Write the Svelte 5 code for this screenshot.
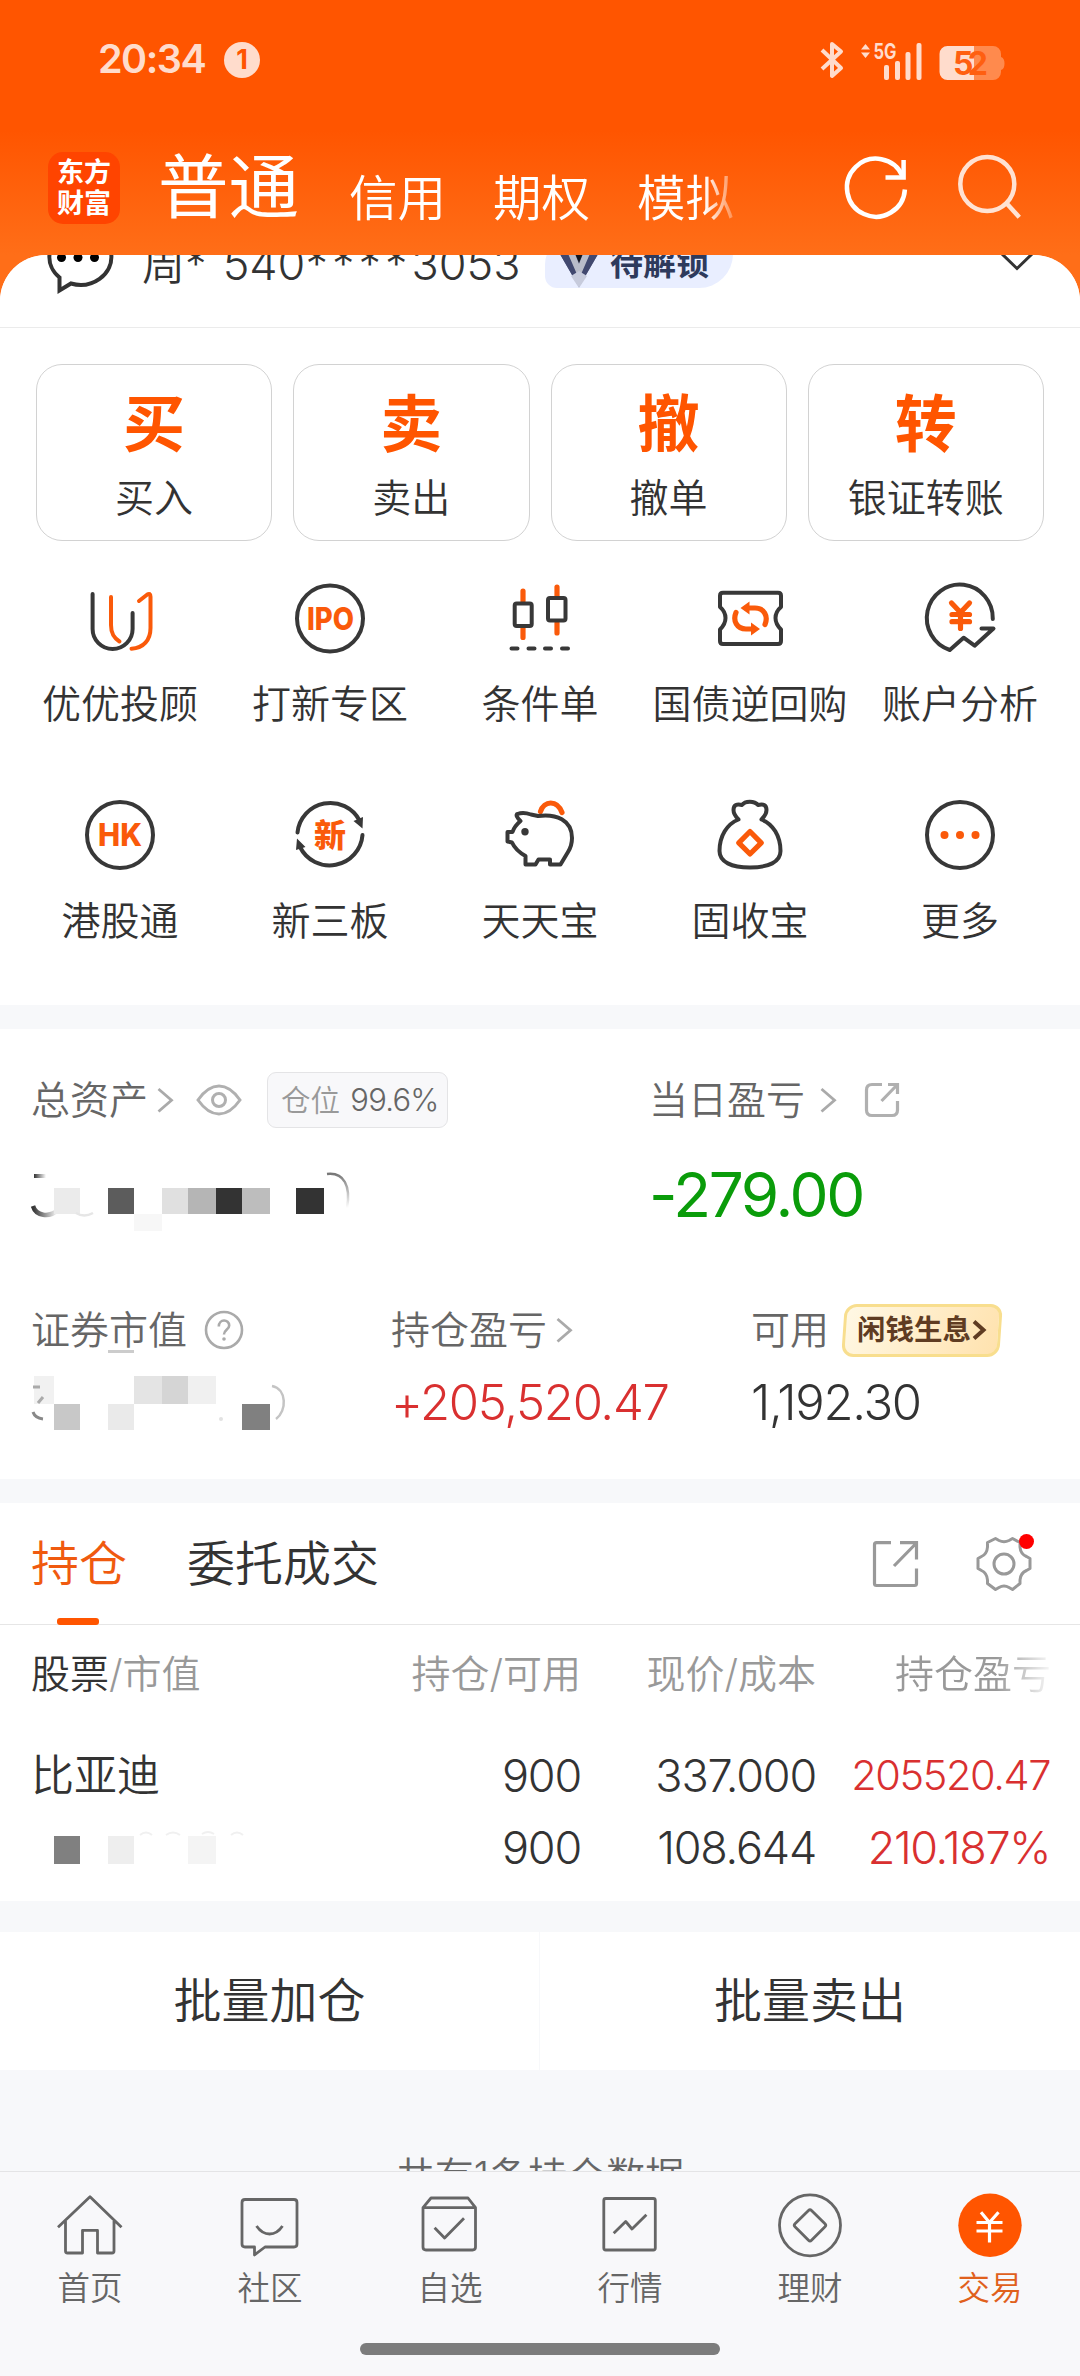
<script lang="ts">
	type Cell = { x: number; y: number; w: number; h: number; fill: string };

	const accountTabs = ['信用', '期权', '模拟'];

	const tradeActions = [
		{ mark: '买', label: '买入' },
		{ mark: '卖', label: '卖出' },
		{ mark: '撤', label: '撤单' },
		{ mark: '转', label: '银证转账' }
	];

	const services = [
		{ icon: 'advisor', label: '优优投顾' },
		{ icon: 'ipo', label: '打新专区' },
		{ icon: 'candles', label: '条件单' },
		{ icon: 'repo', label: '国债逆回购' },
		{ icon: 'analysis', label: '账户分析' },
		{ icon: 'hk', label: '港股通' },
		{ icon: 'neeq', label: '新三板' },
		{ icon: 'piggy', label: '天天宝' },
		{ icon: 'bag', label: '固收宝' },
		{ icon: 'more', label: '更多' }
	];

	const navItems = [
		{ icon: 'home', label: '首页' },
		{ icon: 'community', label: '社区' },
		{ icon: 'watchlist', label: '自选' },
		{ icon: 'market', label: '行情' },
		{ icon: 'wealth', label: '理财' },
		{ icon: 'trade', label: '交易', active: true }
	];

	// pixel blocks that hide the private amounts
	const totalMask: Cell[] = [
		{ x: 23, y: 28, w: 26, h: 26, fill: '#ebebeb' },
		{ x: 77, y: 28, w: 26, h: 26, fill: '#5c5c5c' },
		{ x: 131, y: 28, w: 26, h: 26, fill: '#e0e0e0' },
		{ x: 157, y: 28, w: 28, h: 26, fill: '#b5b5b5' },
		{ x: 185, y: 28, w: 26, h: 26, fill: '#333333' },
		{ x: 211, y: 28, w: 28, h: 26, fill: '#bdbdbd' },
		{ x: 265, y: 28, w: 28, h: 26, fill: '#333333' },
		{ x: 103, y: 54, w: 28, h: 17, fill: '#f7f7f7' }
	];

	const marketMask: Cell[] = [
		{ x: 3, y: 3, w: 20, h: 28, fill: '#f1f1f1' },
		{ x: 103, y: 3, w: 28, h: 28, fill: '#e4e4e4' },
		{ x: 131, y: 3, w: 26, h: 28, fill: '#d5d5d5' },
		{ x: 157, y: 3, w: 28, h: 28, fill: '#f0f0f0' },
		{ x: 23, y: 31, w: 26, h: 26, fill: '#c8c8c8' },
		{ x: 77, y: 31, w: 26, h: 26, fill: '#eaeaea' },
		{ x: 211, y: 31, w: 28, h: 26, fill: '#808080' }
	];

	const stockMask: Cell[] = [
		{ x: 23, y: 8, w: 26, h: 28, fill: '#808080' },
		{ x: 77, y: 8, w: 26, h: 28, fill: '#eeeeee' },
		{ x: 157, y: 8, w: 28, h: 28, fill: '#f4f4f4' }
	];
</script>

{#snippet cells(list: Cell[])}
	{#each list as c}
		<rect x={c.x} y={c.y} width={c.w} height={c.h} fill={c.fill} />
	{/each}
{/snippet}

{#snippet chevron()}
	<svg class="chevron" width="18" height="28" viewBox="0 0 18 28">
		<path d="M2.5 3 15.5 14.2 2.5 25.5" />
	</svg>
{/snippet}

<div class="app">
	<header>
		<div class="status">
			<span class="time">20:34</span>
			<span class="notice">1</span>
			<svg class="signals" width="190" height="44" viewBox="0 0 190 44">
				<path class="bt" d="M3 12 22 30 13 38V6L22 13.5 3 31" />
				<path class="lit" d="M42 11.5 46.500 6 51 11.500zM42 14.500 46.500 20 51 14.500z" />
				<text class="net" x="54.500" y="20.500" textLength="23" lengthAdjust="spacingAndGlyphs">5G</text>
				<rect class="lit" x="65" y="27" width="5" height="15" rx="2" />
				<rect class="lit" x="76" y="23" width="5" height="19" rx="2" />
				<rect class="lit" x="86.500" y="14" width="5" height="28" rx="2" />
				<rect class="lit" x="97.500" y="5" width="5" height="37" rx="2" />
				<path class="dim" d="M155 8h19a8 8 0 0 1 8 8v3q3.500 1 3.500 6.500T182 32v2a8 8 0 0 1-8 8H155z" />
				<path class="lit" d="M155 8h-26.500a8 8 0 0 0-8 8v18a8 8 0 0 0 8 8H155z" />
				<text class="level" x="134" y="36.500" textLength="35">52</text>
			</svg>
		</div>
		<div class="titlebar">
			<div class="logo"><span>东方</span><span>财富</span></div>
			<h1>普通</h1>
			<div class="account-tabs">
				{#each accountTabs as tab}
					<span>{tab}</span>
				{/each}
			</div>
			<svg class="head-icon refresh" width="80" height="80" viewBox="0 0 80 80">
				<path d="M68.9 41.5A29 29 0 1 1 66.5 28" />
				<path d="M67.6 12V29.5H49.5" />
			</svg>
			<svg class="head-icon search" width="80" height="80" viewBox="0 0 80 80">
				<circle cx="40.3" cy="36" r="27" />
				<path d="M58.6 54.3 72.3 69.3" />
			</svg>
		</div>
	</header>

	<main>
		<section class="sheet">
			<div class="account-clip">
				<div class="account">
					<svg class="chat" width="72" height="80" viewBox="0 0 72 80">
						<path d="M17.5 53.5A31 28 0 1 1 29 59.5L17.5 66.5z" />
						<circle cx="19.5" cy="33.5" r="4.5" />
						<circle cx="36" cy="33.5" r="4.5" />
						<circle cx="52.5" cy="33.5" r="4.5" />
					</svg>
					<span class="account-no">周* <span class="digits">540<span class="stars">****</span>3053</span></span>
					<span class="level-badge">
						<svg width="44" height="50" viewBox="0 0 44 50">
							<path d="M0 10H44L22 48z" fill="#6b7190" />
							<path d="M0 10H12L22 34 32 10H44L22 48z" fill="#41486f" />
							<path d="M9 10 22 40 35 10H28L22 25 16 10z" fill="#b9bcc9" />
							<path d="M17 12H27L22 24z" fill="#14161f" />
							<path d="M14 37 22 32 30 37 22 49z" fill="#c7cbdc" />
						</svg>
						待解锁
					</span>
					<svg class="expand" width="36" height="24" viewBox="0 0 36 24">
						<path d="M2 1 18 16.5 34 1" />
					</svg>
				</div>
			</div>

			<div class="actions">
				{#each tradeActions as action}
					<button type="button" class="action">
						<b>{action.mark}</b>
						<span>{action.label}</span>
					</button>
				{/each}
			</div>

			<div class="services">
				{#each services as service}
					<div class="service">
						<svg width="80" height="80" viewBox="0 0 80 80">
							{#if service.icon === 'advisor'}
								<path class="k" d="M12.6 16V51a20 20 0 0 0 40 0V35" />
								<path class="o" d="M31 19V47c0 9 3 13 8.5 16.5" />
								<path class="o" d="M59 23 67 16.7q3.5-2.3 3.5 2V50c0 12-7 20.2-19 20.7" />
							{:else if service.icon === 'ipo'}
								<circle class="k" cx="40" cy="40.5" r="33" />
								<text class="mark" x="17" y="51.5" font-size="31" textLength="47" lengthAdjust="spacingAndGlyphs">IPO</text>
							{:else if service.icon === 'candles'}
								<path class="o bold" d="M23 13V23M23 50V59.5M57 9V18M57 45V55" />
								<rect class="k" x="14.7" y="25.5" width="17" height="22.5" rx="2" />
								<rect class="k" x="48" y="20" width="17.5" height="22.5" rx="2" />
								<path class="k" d="M11.5 70.5H17.5M28.5 70.5H34.5M45 70.5H51M62 70.5H68" />
							{:else if service.icon === 'repo'}
								<path class="k" d="M13 14.7H68q3 0 3 3V29c-3.5 3-5.5 6-5.5 11s2 8 5.500 11.500V63q0 3-3 3H13q-3 0-3-3V51.5c3.5-3.5 5.5-6.5 5.5-11.5S13.5 32 10 29V17.7q0-3 3-3z" />
								<path class="o bold" d="M26 34.5C22.5 43 27 51 36 51H43M55 46.5C58.5 38 54 30 45 30H38" />
								<path class="of" d="M41 44.5 50 51 41 57.500zM39.5 23.5 30.5 30 39.5 36.5z" />
							{:else if service.icon === 'analysis'}
								<path class="k" d="M72.8 41A33 33.5 0 1 0 29.8 72L43.6 59.7 54.6 67.7 73.5 50.5H61.5" />
								<path class="o bold" d="M31.5 25 40.5 34.5 49.5 25M40.5 34.5V50.5M32 36.5H49.5M32 43.7H49.5" />
							{:else if service.icon === 'hk'}
								<circle class="k" cx="40" cy="40" r="33" />
								<text class="mark" x="18" y="51" font-size="31" textLength="44" lengthAdjust="spacingAndGlyphs">HK</text>
							{:else if service.icon === 'neeq'}
								<path class="k" d="M7.5 37.5A33 33 0 0 1 69.5 25.5M72.5 40A33 33 0 0 1 10 52" />
								<path class="kf" d="M63.5 26 73 22 72.5 33.500zM7 43.5 15.5 52 6 55z" />
								<text class="mark" x="24" y="51.5" font-size="32">新</text>
							{:else if service.icon === 'piggy'}
								<path class="o bold" d="M40.5 16.5C44 5.5 57 4.5 62 17.5" />
								<path class="k" d="M20.5 26C17 23 15.5 19.5 17.5 19 21 17.5 27 18 31 19.5L38 21C56 18.5 72 25 72 43 72 49 70.5 53 68 57L60.5 69.5H50V64.5H38.5L35.5 69.5H25.5V61C18.5 57 14.5 53 12 47.5L7.5 46.5V37H12.5C14 32 17 29 20.5 26z" />
								<circle class="kf" cx="25" cy="36.8" r="3.7" />
							{:else if service.icon === 'bag'}
								<path class="k" d="M28.5 24.5C24 20 23.5 18 23.5 15c0-5 3.5-6.5 8.5-5 3-4.5 12.5-4.5 16 0C53 8.5 56.5 10 56.5 15c0 3-.5 5-5 9.5C63 29 70.5 41 70.5 56c0 11-12 16.5-30.5 16.5S9.5 67 9.5 56C9.5 41 17 29 28.5 24.5z" />
								<path class="o bold" d="M40 36.5 51.2 47.8 40 59 28.8 47.8z" />
							{:else}
								<circle class="k" cx="40" cy="40" r="33" />
								<circle class="of" cx="24.5" cy="40" r="4" />
								<circle class="of" cx="40" cy="40" r="4" />
								<circle class="of" cx="55.5" cy="40" r="4" />
							{/if}
						</svg>
						<span>{service.label}</span>
					</div>
				{/each}
			</div>
		</section>

		<section class="assets">
			<div class="line two">
				<div class="label">
					总资产
					<span class="gap-s">{@render chevron()}</span>
					<svg class="eye" width="46" height="34" viewBox="0 0 46 34">
						<path d="M2 17C9 7 15 3 23 3S37 7 44 17C37 27 31 31 23 31S9 27 2 17z" />
						<circle cx="23" cy="17" r="6.5" />
					</svg>
					<span class="position">仓位 <em>99.6%</em></span>
				</div>
				<div class="label">
					当日盈亏
					<span class="gap-m">{@render chevron()}</span>
					<svg class="share small" width="36" height="36" viewBox="0 0 36 36">
						<path d="M18 2.5H8q-5.5 0-5.5 5.5V28q0 5.5 5.5 5.5H28q5.5 0 5.5-5.5V19M24 2.5H33.5V12M33 3 17.5 19" />
					</svg>
				</div>
			</div>
			<div class="line two total">
				<svg class="mask" width="330" height="70" viewBox="0 0 330 70">
					<defs>
						<linearGradient id="fadeRight"><stop stop-color="#333" /><stop offset="1" stop-color="#333" stop-opacity="0" /></linearGradient>
						<linearGradient id="fadeDown" x2="0" y2="1"><stop stop-color="#777" /><stop offset="1" stop-color="#777" stop-opacity="0" /></linearGradient>
					</defs>
					<rect x="3" y="14" width="12" height="4" fill="url(#fadeRight)" />
					<path d="M2 46C5 56 18 58 27 50" stroke="url(#fadeRight)" stroke-width="4.5" fill="none" />
					{@render cells(totalMask)}
					<path d="M45 53Q53 58 62 53" stroke="#e6e6e6" stroke-width="2.5" fill="none" />
					<path d="M296 14C313 12 320 26 316 48" stroke="url(#fadeDown)" stroke-width="2.5" fill="none" />
				</svg>
				<span class="day-profit">-279.00</span>
			</div>
			<div class="line three sub">
				<div class="label">
					<span class="smudged">证券市值</span>
					<svg class="help" width="40" height="40" viewBox="0 0 40 40">
						<circle cx="20" cy="20" r="18" />
						<path d="M14.8 16.5C14.8 8.5 25.2 9 25.2 15.5 25.2 19.5 20 19.5 20 24.5" />
						<circle class="dot" cx="20" cy="29" r="1.8" />
					</svg>
				</div>
				<div class="label">
					持仓盈亏
					<span class="gap-s">{@render chevron()}</span>
				</div>
				<div class="label">
					可用
					<span class="promo"><i></i><span>闲钱生息</span>
						<svg width="16" height="24" viewBox="0 0 16 24"><path d="M3 3.5 12.5 12 3 20.5" /></svg>
					</span>
				</div>
			</div>
			<div class="line three amounts">
				<svg class="mask" width="330" height="60" viewBox="0 0 330 60">
					{@render cells(marketMask)}
					<path d="M2 14H9M12 24 7 30" stroke="#aaa" stroke-width="3" fill="none" />
					<path d="M2 39Q4 45 12 46" stroke="#888" stroke-width="3" fill="none" />
					<path d="M241 13C256 16 256 38 245 46" stroke="#c4c4c4" stroke-width="2.5" fill="none" />
					<circle cx="190" cy="46" r="2" fill="#e2e2e2" />
				</svg>
				<span class="hold-profit">+205,520.47</span>
				<span class="cash">1,192.30</span>
			</div>
		</section>

		<section class="holdings">
			<div class="tabs">
				<span class="tab current">持仓</span>
				<span class="tab">委托成交</span>
				<svg class="share large" width="50" height="50" viewBox="0 0 50 50">
					<path d="M20 3.7H5.5q-2 0-2 2V44.5q0 2 2 2H43.5q2 0 2-2V29.5M29 3.7H45.5V20.5M45 4.5 23 27" />
				</svg>
				<span class="settings">
					<svg width="60" height="60" viewBox="0 0 60 60">
						<path d="M21.5 4.5 25 6.5Q30 9 35 6.5L38.5 4.5 46 8.5V13Q46.5 20 52.5 22.5L56 24.5V34.5L52.5 36.5Q46.5 39 46 46V49.5L38.5 55.5 35 53.5Q30 50.5 25 53.5L21.5 55.5 13.5 49.5V46Q13 39 7.5 36.5L4 34.5V24.5L7.5 22.5Q13 20 13.5 13V8.5z" />
						<circle cx="30" cy="30" r="10" />
					</svg>
					<i></i>
				</span>
			</div>
			<div class="row head">
				<span class="first"><b>股票</b>/市值</span>
				<span>持仓/可用</span>
				<span>现价/成本</span>
				<span class="fade">持仓盈亏</span>
			</div>
			<div class="stock">
				<div class="row">
					<span class="first name">比亚迪</span>
					<span class="num">900</span>
					<span class="num">337.000</span>
					<span class="num up amount">205520.47</span>
				</div>
				<div class="row">
					<svg class="mask" width="330" height="40" viewBox="0 0 330 40">
						{@render cells(stockMask)}
						<path d="M109 7Q115 2 121 7M135 7Q142 2 149 7M171 6Q177 2 183 6M200 7Q206 2 212 7" stroke="#f0f0f0" stroke-width="2" fill="none" />
					</svg>
					<span class="num">900</span>
					<span class="num">108.644</span>
					<span class="num up">210.187%</span>
				</div>
			</div>
		</section>

		<div class="batch">
			<button type="button">批量加仓</button>
			<button type="button">批量卖出</button>
		</div>
		<p class="count">共有1条持仓数据</p>
	</main>

	<nav>
		<div class="nav-items">
			{#each navItems as item}
				<div class="nav-item" class:active={item.active}>
					<svg width="80" height="80" viewBox="0 0 80 80">
						{#if item.icon === 'home'}
							<path d="M8 42.3 40 11.7 71.5 42.3M15.5 36V66q0 2 2 2H32.5V45.3H47.5V68H62q2 0 2-2V36" />
						{:else if item.icon === 'community'}
							<path d="M15 14.5H64q3 0 3 3V59q0 3-3 3H35L24.5 70V62H15q-3 0-3-3V17.5q0-3 3-3zM26.5 41Q32 49 39.6 49T52.5 41" />
						{:else if item.icon === 'watchlist'}
							<path d="M13 22.7 21 13H58L65.5 22.7V62q0 3-3 3H16q-3 0-3-3zH65.5M24.6 42.7 34.6 53 54 33.3" />
						{:else if item.icon === 'market'}
							<rect x="13.8" y="13.5" width="51.5" height="51.5" rx="2" />
							<path d="M23.7 48.3 35.7 36.5 42 44 56.4 29.7" />
						{:else if item.icon === 'wealth'}
							<circle cx="40" cy="40.3" r="30.5" />
							<path d="M38.5 25.5q1.5-1.5 3 0L55 38.8q1.5 1.5 0 3L41.5 55.2q-1.5 1.5-3 0L25 41.8q-1.5-1.5 0-3z" />
						{:else}
							<circle class="disc" cx="40" cy="40.3" r="31.7" />
							<path class="yen" d="M31 27.3 39.5 37.5 48.5 27.3M39.5 37.5V57.5M26.5 37.5H52.5M26.5 46H52.5" />
						{/if}
					</svg>
					<span>{item.label}</span>
				</div>
			{/each}
		</div>
		<div class="home-bar"></div>
	</nav>
</div>

<style>
	:global(body) {
		margin: 0;
	}

	.app {
		display: flex;
		flex-direction: column;
		width: 1080px;
		height: 2376px;
		overflow: hidden;
		background: linear-gradient(#ff5500 0, #ff5500 130px, #ff6e18 255px, #ff6e18 310px);
		color: #333;
		font-family: Inter, 'Noto Sans CJK SC', sans-serif;
		font-weight: 350;
		line-height: 1.2;
		white-space: nowrap;
	}

	svg {
		display: block;
		flex-shrink: 0;
	}

	button {
		padding: 0;
		border: none;
		background: none;
		color: inherit;
		font: inherit;
	}

	/* header */
	.status {
		display: flex;
		align-items: center;
		height: 120px;
		padding-left: 98px;
	}

	.time {
		width: 126px;
		color: #ffdccc;
		font-size: 39.5px;
		font-weight: 600;
		letter-spacing: -1.5px;
	}

	.notice {
		width: 36px;
		height: 36px;
		border-radius: 50%;
		background: #ffdccc;
		color: #ff5500;
		font-size: 27px;
		font-weight: 700;
		line-height: 36px;
		text-align: center;
	}

	.signals {
		margin-left: 559px;
	}

	.lit {
		fill: #ffdccc;
	}

	.dim {
		fill: #ff8a4d;
	}

	.bt {
		fill: none;
		stroke: #ffdccc;
		stroke-width: 4;
		stroke-linejoin: round;
	}

	.net {
		fill: #ffdccc;
		font-size: 21px;
		font-weight: 700;
	}

	.level {
		fill: #ff5f10;
		font-size: 32px;
		font-weight: 700;
	}

	.titlebar {
		display: flex;
		align-items: center;
		height: 135px;
		padding-left: 48px;
	}

	.logo {
		display: flex;
		flex-direction: column;
		justify-content: center;
		width: 72px;
		height: 72px;
		border-radius: 15px;
		background: #ff4400;
		color: #fff;
		font-size: 27px;
		font-weight: 700;
		line-height: 31px;
		text-align: center;
	}

	h1 {
		margin: 0 0 0 38px;
		color: #fff;
		font-size: 70.5px;
		font-weight: 400;
		line-height: 76px;
	}

	.account-tabs {
		display: flex;
		gap: 47px;
		width: 487px;
		margin: 23px 0 0 50px;
		color: #fff;
		font-size: 48.5px;
		line-height: 60px;
		-webkit-mask-image: linear-gradient(90deg, #000 355px, transparent 396px);
		mask-image: linear-gradient(90deg, #000 355px, transparent 396px);
	}

	.head-icon {
		fill: none;
		stroke: #fff;
		stroke-width: 4.5;
	}

	.search {
		margin-left: 31px;
		opacity: 0.82;
	}

	/* white sheet */
	main {
		flex: 1;
		min-height: 0;
		overflow: hidden;
		border-radius: 46px 46px 0 0;
		background: #f7f8fa;
	}

	.sheet {
		height: 750px;
		background: #fff;
	}

	.account-clip {
		height: 72px;
		overflow: hidden;
		border-bottom: 1px solid #ebebeb;
	}

	.account {
		display: flex;
		align-items: center;
		height: 126px;
		margin-top: -54px;
		padding: 0 46px 0 42px;
	}

	.chat path {
		fill: none;
		stroke: #333;
		stroke-width: 4;
	}

	.account-no {
		width: 403px;
		margin-left: 28px;
		font-size: 43px;
	}

	.digits {
		margin-left: 4px;
		font-size: 45px;
	}

	.stars {
		letter-spacing: 4px;
	}

	.level-badge {
		display: flex;
		align-items: center;
		gap: 9px;
		box-sizing: border-box;
		width: 188px;
		height: 48px;
		padding-left: 12px;
		border-radius: 24px 12px 34px 12px;
		background: #e9eeff;
		color: #2e3a5c;
		font-size: 33px;
		font-weight: 600;
	}

	.expand {
		margin-left: auto;
		margin-right: -1px;
	}

	.expand path {
		fill: none;
		stroke: #333;
		stroke-width: 3;
	}

	.actions {
		display: grid;
		grid-template-columns: repeat(4, 1fr);
		gap: 21px;
		margin: 36px 36px 0;
	}

	.action {
		display: flex;
		flex-direction: column;
		align-items: center;
		box-sizing: border-box;
		height: 177px;
		padding-top: 23px;
		border: 1px solid #d2d2d2;
		border-radius: 26px;
	}

	.action b {
		color: #ff5500;
		font-size: 62px;
		font-weight: 700;
		line-height: 74px;
	}

	.action span {
		margin-top: 11px;
		font-size: 39px;
		line-height: 50px;
	}

	.services {
		display: grid;
		grid-template-columns: repeat(5, 210px);
		row-gap: 66px;
		margin: 37px 15px 0;
	}

	.service {
		display: flex;
		flex-direction: column;
		align-items: center;
		gap: 21px;
		font-size: 39px;
		line-height: 50px;
	}

	.k,
	.o {
		fill: none;
		stroke: #383838;
		stroke-width: 4;
		stroke-linecap: round;
		stroke-linejoin: round;
	}

	.o {
		stroke: #fa5a0a;
	}

	.bold {
		stroke-width: 5.2;
	}

	.kf {
		fill: #383838;
	}

	.of,
	.mark {
		fill: #fa5a0a;
	}

	.mark {
		font-weight: 800;
	}

	/* assets */
	.assets {
		box-sizing: border-box;
		height: 450px;
		margin-top: 24px;
		padding: 41px 0 0 31px;
		background: #fff;
	}

	.line {
		display: grid;
		align-items: center;
		height: 60px;
	}

	.two {
		grid-template-columns: 618px 1fr;
	}

	.three {
		grid-template-columns: 360px 360px 1fr;
	}

	.label {
		display: flex;
		align-items: center;
		color: #666;
		font-size: 39px;
	}

	.chevron path {
		fill: none;
		stroke: #aaa;
		stroke-width: 2.8;
	}

	.gap-s {
		margin-left: 8px;
	}

	.gap-m {
		margin-left: 14px;
	}

	.eye {
		margin-left: 22px;
		fill: none;
		stroke: #b0b0b0;
		stroke-width: 3;
	}

	.position {
		box-sizing: border-box;
		width: 181px;
		height: 56px;
		margin-left: 25px;
		padding-left: 13px;
		border: 1px solid #e4e4e6;
		border-radius: 9px;
		background: #f8f8fa;
		color: #999;
		font-size: 29.5px;
		line-height: 54px;
	}

	.position em {
		margin-left: 2px;
		color: #666;
		font-size: 31px;
		font-style: normal;
		letter-spacing: -0.8px;
	}

	.share {
		fill: none;
		stroke: #b0b0b0;
		stroke-width: 3.2;
	}

	.small {
		margin-left: 27px;
	}

	.total {
		height: 70px;
		margin-top: 30px;
	}

	.mask {
		overflow: visible;
	}

	.day-profit {
		color: #0a9c0a;
		font-size: 62px;
		font-weight: 400;
		letter-spacing: -2.3px;
		line-height: 70px;
	}

	.sub {
		margin-top: 70px;
	}

	/* faint trace of the mask under the label */
	.smudged {
		background: linear-gradient(#ccc, #ccc) 77px 100% / 26px 3px no-repeat;
	}

	.help {
		margin-left: 17px;
		fill: none;
		stroke: #aaa;
		stroke-width: 2.6;
	}

	.help .dot {
		fill: #aaa;
		stroke: none;
	}

	.promo {
		display: flex;
		align-items: center;
		position: relative;
		box-sizing: border-box;
		width: 158px;
		height: 53px;
		margin-left: 14px;
		padding-left: 14px;
		color: #5f3c22;
		font-size: 28.5px;
		font-weight: 700;
	}

	.promo i {
		position: absolute;
		inset: 0;
		box-sizing: border-box;
		border: 3px solid #f8de8e;
		border-radius: 12px;
		background: linear-gradient(110deg, #fff8e4, #ffe2ae);
		transform: skewX(-4deg);
	}

	.promo span,
	.promo svg {
		position: relative;
	}

	.promo path {
		fill: none;
		stroke: #5f3c22;
		stroke-width: 4;
	}

	.amounts {
		margin-top: 13px;
	}

	.hold-profit,
	.cash {
		font-size: 49px;
		letter-spacing: -1.3px;
	}

	.hold-profit,
	.up {
		color: #d93030;
	}

	/* holdings */
	.holdings {
		height: 398px;
		margin-top: 24px;
		background: #fff;
	}

	.tabs {
		display: flex;
		align-items: center;
		height: 121px;
		padding-left: 31px;
		border-bottom: 1px solid #e6e6e6;
	}

	.tab {
		margin-right: 60px;
		font-size: 48px;
		line-height: 58px;
	}

	.current {
		position: relative;
		color: #f05a0f;
	}

	.current::after {
		content: '';
		position: absolute;
		bottom: -32px;
		left: 26px;
		width: 42px;
		height: 7px;
		border-radius: 3px;
		background: #ff5500;
	}

	.share.large {
		margin-left: 432px;
		stroke: #999;
	}

	.settings {
		position: relative;
		margin-left: 53px;
	}

	.settings svg {
		fill: none;
		stroke: #999;
		stroke-width: 3;
		stroke-linejoin: round;
	}

	.settings i {
		position: absolute;
		top: 0;
		right: 0;
		width: 15px;
		height: 15px;
		border-radius: 50%;
		background: #f00;
	}

	.row {
		display: grid;
		grid-template-columns: 350px 200px 235px 233px;
		align-items: center;
		height: 72px;
		padding-left: 31px;
		text-align: right;
	}

	.head {
		height: 99px;
		color: #999;
		font-size: 39px;
	}

	.head b {
		color: #333;
		font-weight: inherit;
	}

	.first {
		text-align: left;
	}

	.fade {
		margin-right: -2px;
		-webkit-mask-image: linear-gradient(90deg, #000 180px, rgba(0, 0, 0, 0.1) 233px);
		mask-image: linear-gradient(90deg, #000 180px, rgba(0, 0, 0, 0.1) 233px);
	}

	.stock {
		padding-top: 16px;
	}

	.name {
		font-size: 43px;
	}

	.num {
		font-size: 45px;
		letter-spacing: -1.2px;
	}

	.up {
		margin-right: -1px;
		letter-spacing: -1.4px;
	}

	.amount {
		font-size: 41.5px;
	}

	/* batch buttons */
	.batch {
		display: grid;
		grid-template-columns: 539px 540px;
		gap: 1px;
		height: 138px;
		margin-top: 31px;
	}

	.batch button {
		background: #fff;
		font-size: 48px;
	}

	.count {
		margin: 80px 0 0;
		color: #666;
		font-size: 39px;
		line-height: 52px;
		text-align: center;
	}

	/* bottom navigation */
	nav {
		box-sizing: border-box;
		height: 205px;
		border-top: 1px solid #e4e4e6;
		background: #f8f8fa;
	}

	.nav-items {
		display: grid;
		grid-template-columns: repeat(6, 1fr);
		padding-top: 13px;
	}

	.nav-item {
		display: flex;
		flex-direction: column;
		align-items: center;
		color: #666;
		font-size: 32.5px;
		line-height: 48px;
	}

	.nav-item svg {
		fill: none;
		stroke: #666;
		stroke-width: 2.8;
		stroke-linejoin: round;
	}

	.nav-item.active {
		color: #e0601c;
	}

	.nav-item .disc {
		fill: #ff5500;
		stroke: none;
	}

	.nav-item .yen {
		stroke: #fff;
		stroke-width: 3.2;
	}

	.home-bar {
		width: 360px;
		height: 12px;
		margin: 30px auto 0;
		border-radius: 6px;
		background: #7c7c7c;
	}
</style>
